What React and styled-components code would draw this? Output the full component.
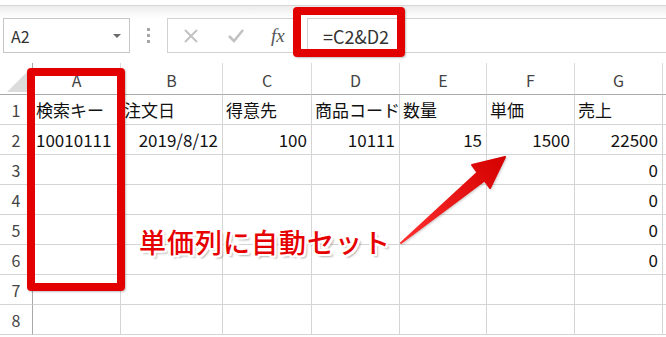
import React from "react";
import styled, { createGlobalStyle } from "styled-components";

const GlobalStyle = createGlobalStyle`
  body {
    margin: 0;
    background: #fff;
    font-family: "Noto Sans CJK JP", "Noto Sans", sans-serif;
  }
`;

const columns = ["A", "B", "C", "D", "E", "F", "G", ""];
const widths = [33, 88, 102, 89, 88, 87, 88, 88, 40];

const rows = [
  [
    { v: "検索キー" },
    { v: "注文日" },
    { v: "得意先" },
    { v: "商品コード" },
    { v: "数量" },
    { v: "単価" },
    { v: "売上" },
  ],
  [
    { v: "10010111" },
    { v: "2019/8/12", right: true },
    { v: "100", right: true },
    { v: "10111", right: true },
    { v: "15", right: true },
    { v: "1500", right: true },
    { v: "22500", right: true },
  ],
  [{}, {}, {}, {}, {}, {}, { v: "0", right: true }],
  [{}, {}, {}, {}, {}, {}, { v: "0", right: true }],
  [{}, {}, {}, {}, {}, {}, { v: "0", right: true }],
  [{}, {}, {}, {}, {}, {}, { v: "0", right: true }],
  [],
  [],
];

const App = () => {
  return (
    <Screen>
      <GlobalStyle />
      <TopStrip />
      <FormulaBar>
        <NameBox>
          <span>A2</span>
          <Caret />
        </NameBox>
        <Grip>
          <i />
          <i />
          <i />
        </Grip>
        <ButtonBox>
          <svg width="16" height="16" viewBox="0 0 16 16">
            <path d="M2 2 L14 14 M14 2 L2 14" stroke="#c2c2c2" strokeWidth="2" />
          </svg>
          <svg width="18" height="16" viewBox="0 0 18 16">
            <path d="M2 8 L7 13 L16 2" stroke="#c2c2c2" strokeWidth="2.6" fill="none" />
          </svg>
          <Fx>fx</Fx>
        </ButtonBox>
        <FormulaInput>=C2&amp;D2</FormulaInput>
      </FormulaBar>

      <Sheet>
        <Corner>
          <SelectAll />
        </Corner>
        {columns.map((c, i) => (
          <ColHead key={i}>{c}</ColHead>
        ))}
        {rows.map((r, ri) => (
          <React.Fragment key={ri}>
            <RowHead>{ri + 1}</RowHead>
            {columns.map((_, ci) => {
              const cell = r[ci] || {};
              return (
                <Cell key={ci} $right={cell.right}>
                  {cell.v}
                </Cell>
              );
            })}
          </React.Fragment>
        ))}
      </Sheet>

      <RedFrame $x={27} $y={68} $w={98} $h={223} />
      <RedFrame $x={293} $y={7} $w={112} $h={50} />

      <Arrow width="666" height="337" viewBox="0 0 666 337">
        <defs>
          <linearGradient id="arrowFill" x1="401" y1="243" x2="505" y2="157" gradientUnits="userSpaceOnUse">
            <stop offset="0" stopColor="#ff3030" />
            <stop offset="1" stopColor="#d40000" />
          </linearGradient>
        </defs>
        <polygon
          points="401,243 477.5,172.5 472,165 505,157 490,188 484.5,180.5"
          fill="url(#arrowFill)"
          stroke="url(#arrowFill)"
          strokeWidth="2"
          strokeLinejoin="round"
        />
      </Arrow>

      <Callout>単価列に自動セット</Callout>
    </Screen>
  );
};

const Screen = styled.div`
  position: relative;
  width: 666px;
  height: 337px;
  overflow: hidden;
  background: #fff;
`;

const TopStrip = styled.div`
  height: 5px;
  border-bottom: 1px solid #d6d6d6;
  background: #fff;
`;

const FormulaBar = styled.div`
  height: 45px;
  padding-top: 12px;
  display: flex;
  align-items: flex-start;
  background: linear-gradient(#ececec 0px, #fbfbfb 9px, #fff 14px);
`;

const NameBox = styled.div`
  box-sizing: border-box;
  margin-left: 3px;
  width: 127px;
  height: 35px;
  border: 1px solid #c6c6c6;
  background: #fff;
  display: flex;
  align-items: center;
  justify-content: space-between;
  padding: 0 8px 0 7px;
  font-size: 16px;
  color: #333;
`;

const Caret = styled.div`
  width: 0;
  height: 0;
  border-left: 4px solid transparent;
  border-right: 4px solid transparent;
  border-top: 4px solid #6a6a6a;
`;

const Grip = styled.div`
  width: 37px;
  height: 35px;
  display: flex;
  flex-direction: column;
  align-items: center;
  justify-content: center;
  gap: 3px;
  i {
    width: 3px;
    height: 3px;
    background: #a6a6a6;
  }
`;

const ButtonBox = styled.div`
  box-sizing: border-box;
  width: 134px;
  height: 35px;
  border: 1px solid #d2d2d2;
  background: #fff;
  display: flex;
  align-items: center;
  gap: 28px;
  padding-left: 15px;
`;

const Fx = styled.span`
  font-family: "Liberation Serif", serif;
  font-style: italic;
  font-size: 19px;
  color: #555;
  margin-left: -2px;
`;

const FormulaInput = styled.div`
  box-sizing: border-box;
  margin-left: 6px;
  flex: 1;
  height: 35px;
  border: 1px solid #d2d2d2;
  border-right: none;
  background: #fff;
  display: flex;
  align-items: center;
  padding-left: 15px;
  font-size: 18px;
  color: #333;
`;

const Sheet = styled.div`
  display: grid;
  grid-template-columns: ${widths.map((w) => w + "px").join(" ")};
  grid-template-rows: 32px repeat(8, 30px);
  font-size: 17px;
`;

const Corner = styled.div`
  position: relative;
  border-right: 1px solid #a9a9a9;
  border-bottom: 1px solid #a9a9a9;
`;

const SelectAll = styled.div`
  position: absolute;
  right: 3px;
  bottom: 2px;
  width: 22px;
  height: 22px;
  background: #dcdcdc;
  clip-path: polygon(100% 0, 100% 100%, 0 100%);
`;

const ColHead = styled.div`
  box-sizing: border-box;
  border-right: 1px solid #dadada;
  border-bottom: 1px solid #a9a9a9;
  display: flex;
  align-items: center;
  justify-content: center;
  padding-top: 2px;
  color: #444;
  font-size: 16px;
`;

const RowHead = styled.div`
  border-right: 1px solid #a9a9a9;
  border-bottom: 1px solid #d4d4d4;
  display: flex;
  align-items: center;
  justify-content: center;
  color: #444;
  font-size: 16px;
`;

const Cell = styled.div`
  box-sizing: border-box;
  border-right: 1px solid #d4d4d4;
  border-bottom: 1px solid #d4d4d4;
  display: flex;
  align-items: center;
  justify-content: ${(p) => (p.$right ? "flex-end" : "flex-start")};
  padding: 0 4px 0 3px;
  white-space: nowrap;
  overflow: hidden;
  color: #111;
`;

const RedFrame = styled.div`
  position: absolute;
  left: ${(p) => p.$x}px;
  top: ${(p) => p.$y}px;
  width: ${(p) => p.$w}px;
  height: ${(p) => p.$h}px;
  box-sizing: border-box;
  border: 8px solid #e30000;
  border-radius: 4px;
  box-shadow: 1px 1px 2px rgba(0, 0, 0, 0.25);
`;

const Arrow = styled.svg`
  position: absolute;
  left: 0;
  top: 0;
  pointer-events: none;
  filter: drop-shadow(1px 1px 1px rgba(0, 0, 0, 0.2));
`;

const Callout = styled.div`
  position: absolute;
  left: 139px;
  top: 222px;
  font-size: 27px;
  font-weight: 500;
  line-height: 40px;
  letter-spacing: 1px;
  color: #e60000;
  text-shadow:
    2px 0 0 #fff, -2px 0 0 #fff, 0 2px 0 #fff, 0 -2px 0 #fff,
    2px 2px 0 #fff, -2px -2px 0 #fff, 2px -2px 0 #fff, -2px 2px 0 #fff,
    3px 3px 2px rgba(0, 0, 0, 0.3);
  white-space: nowrap;
`;

export default App;
